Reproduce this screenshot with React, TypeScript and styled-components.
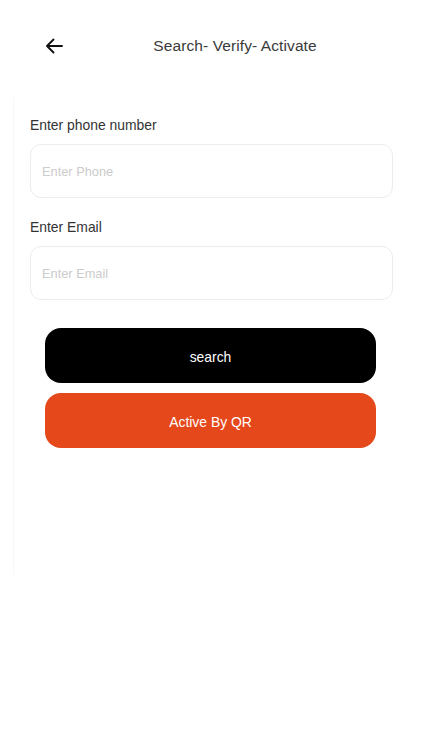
import React from 'react';
import styled, { createGlobalStyle } from 'styled-components';

const GlobalStyle = createGlobalStyle`
  html, body {
    margin: 0;
    padding: 0;
    background: #fff;
    font-family: "Liberation Sans", Arial, sans-serif;
  }
  * { box-sizing: border-box; }
`;

const Page = styled.div`
  width: 422px;
  min-height: 750px;
  background: #fff;
`;

const Header = styled.div`
  height: 92px;
  display: flex;
  align-items: center;
  padding: 0 0 0 44px;
`;

const BackButton = styled.button`
  border: none;
  background: none;
  padding: 0;
  width: 20px;
  height: 20px;
  display: flex;
  align-items: center;
  justify-content: center;
  cursor: pointer;
  color: #111;
`;

const Title = styled.div`
  flex: 1;
  text-align: center;
  padding-right: 24px;
  padding-left: 8px;
  font-size: 15.5px;
  color: #3a3a3a;
  letter-spacing: 0.1px;
`;

const Body = styled.div`
  margin-left: 13px;
  margin-top: 6px;
  min-height: 476px;
  border-left: 1px solid #f7f7f7;
  padding: 18px 30px 0 16px;
`;

const Label = styled.div`
  font-size: 13.9px;
  color: #333;
  margin-bottom: 10px;
  line-height: 18px;
`;

const Input = styled.input`
  width: 363px;
  height: 54px;
  border: 1px solid #ececec;
  border-radius: 11px;
  padding: 0 11px;
  font-family: inherit;
  font-size: 12.8px;
  color: #333;
  outline: none;
  margin-bottom: 20px;
  &::placeholder {
    color: #cccccc;
  }
`;

const Actions = styled.div`
  display: flex;
  flex-direction: column;
  gap: 10px;
  padding: 8px 0 0 15px;
`;

const ActionButton = styled.button<{ $tone: 'dark' | 'accent' }>`
  width: 331px;
  height: 55px;
  border: none;
  border-radius: 16px;
  padding: 3px 0 0;
  background: ${(p) => (p.$tone === 'dark' ? '#000' : '#e5481b')};
  color: #fff;
  font-family: inherit;
  font-size: 13.9px;
  cursor: pointer;
`;

const App: React.FC = () => {
  return (
    <Page>
      <GlobalStyle />
      <Header>
        <BackButton aria-label="back">
          <svg width="20" height="20" viewBox="0 0 20 20" fill="none">
            <path d="M18 10H3M9.5 3.5L3 10l6.5 6.5" stroke="#111" strokeWidth="1.9" strokeLinecap="round" strokeLinejoin="round" />
          </svg>
        </BackButton>
        <Title>Search- Verify- Activate</Title>
      </Header>
      <Body>
        <Label>Enter phone number</Label>
        <Input placeholder="Enter Phone" />
        <Label>Enter Email</Label>
        <Input placeholder="Enter Email" />
        <Actions>
          <ActionButton $tone="dark">search</ActionButton>
          <ActionButton $tone="accent">Active By QR</ActionButton>
        </Actions>
      </Body>
    </Page>
  );
};

export default App;
